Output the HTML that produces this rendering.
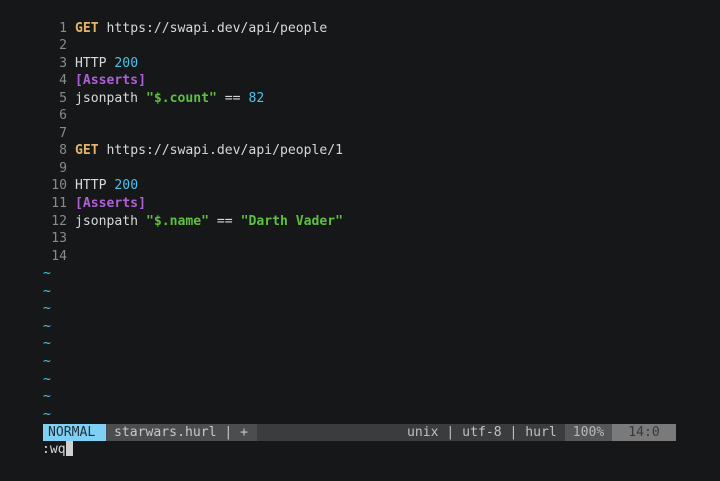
<!DOCTYPE html>
<html><head><meta charset="utf-8"><style>
html,body{margin:0;padding:0;background:#151719;width:720px;height:480px;overflow:hidden}
body{font-family:"DejaVu Sans Mono","Liberation Mono",monospace;font-size:13.1px;color:#d8d8d8}
.w{position:absolute;left:0;top:1px;width:720px;height:480px}
.l{position:absolute;left:43px;height:17.55px;line-height:17.55px;white-space:pre}
.n{color:#8a8a8a;display:inline-block;width:24px;text-align:right;margin-right:8px}
.g{color:#e5b567;font-weight:bold}
.b{color:#4fc1e9}
.p{color:#b05fd8;font-weight:bold}
.s{color:#5fbf3f;font-weight:bold}
.t{color:#4fc1e9}
#sb{position:absolute;left:43px;top:422.5px;width:633px;height:17.5px;background:#3b3c3e;line-height:17.5px;white-space:pre;color:#c8c8c8}
#sb span{position:absolute;top:0;height:17.5px}
</style></head><body><div class="w">
<div class="l" style="top:18.5px"><span class="n">1</span><span class="g">GET</span> https://swapi.dev/api/people</div>
<div class="l" style="top:36.05px"><span class="n">2</span></div>
<div class="l" style="top:53.6px"><span class="n">3</span>HTTP <span class="b">200</span></div>
<div class="l" style="top:71.15px"><span class="n">4</span><span class="p">[Asserts]</span></div>
<div class="l" style="top:88.7px"><span class="n">5</span>jsonpath <span class="s">"$.count"</span> == <span class="b">82</span></div>
<div class="l" style="top:106.25px"><span class="n">6</span></div>
<div class="l" style="top:123.8px"><span class="n">7</span></div>
<div class="l" style="top:141.35px"><span class="n">8</span><span class="g">GET</span> https://swapi.dev/api/people/1</div>
<div class="l" style="top:158.9px"><span class="n">9</span></div>
<div class="l" style="top:176.45px"><span class="n">10</span>HTTP <span class="b">200</span></div>
<div class="l" style="top:194px"><span class="n">11</span><span class="p">[Asserts]</span></div>
<div class="l" style="top:211.55px"><span class="n">12</span>jsonpath <span class="s">"$.name"</span> == <span class="s">"Darth Vader"</span></div>
<div class="l" style="top:229.1px"><span class="n">13</span></div>
<div class="l" style="top:246.65px"><span class="n">14</span></div>
<div class="l t" style="top:264.2px">~</div>
<div class="l t" style="top:281.75px">~</div>
<div class="l t" style="top:299.3px">~</div>
<div class="l t" style="top:316.85px">~</div>
<div class="l t" style="top:334.4px">~</div>
<div class="l t" style="top:351.95px">~</div>
<div class="l t" style="top:369.5px">~</div>
<div class="l t" style="top:387.05px">~</div>
<div class="l t" style="top:404.6px">~</div>
<div id="sb">
<span style="left:0;width:63px;background:#7fd0f5;color:#22313a;padding-left:5px;box-sizing:border-box">NORMAL</span>
<span style="left:63px;width:151px;background:#4c4d4f;padding-left:8px;box-sizing:border-box">starwars.hurl | +</span>
<span style="left:364px;color:#c0c0c0">unix | utf-8 | hurl</span>
<span style="left:522px;width:47px;background:#555658;color:#b8b8b8;text-align:center">100%</span>
<span style="left:569px;width:64px;background:#7a7a7b;color:#3a3a3a;text-align:center">14:0</span>
</div>
<div class="l" style="top:439.5px;left:42px">:wq<span style="background:#d0d0d0;display:inline-block;width:7px;height:15px;vertical-align:-3px"></span></div>
</div></body></html>
